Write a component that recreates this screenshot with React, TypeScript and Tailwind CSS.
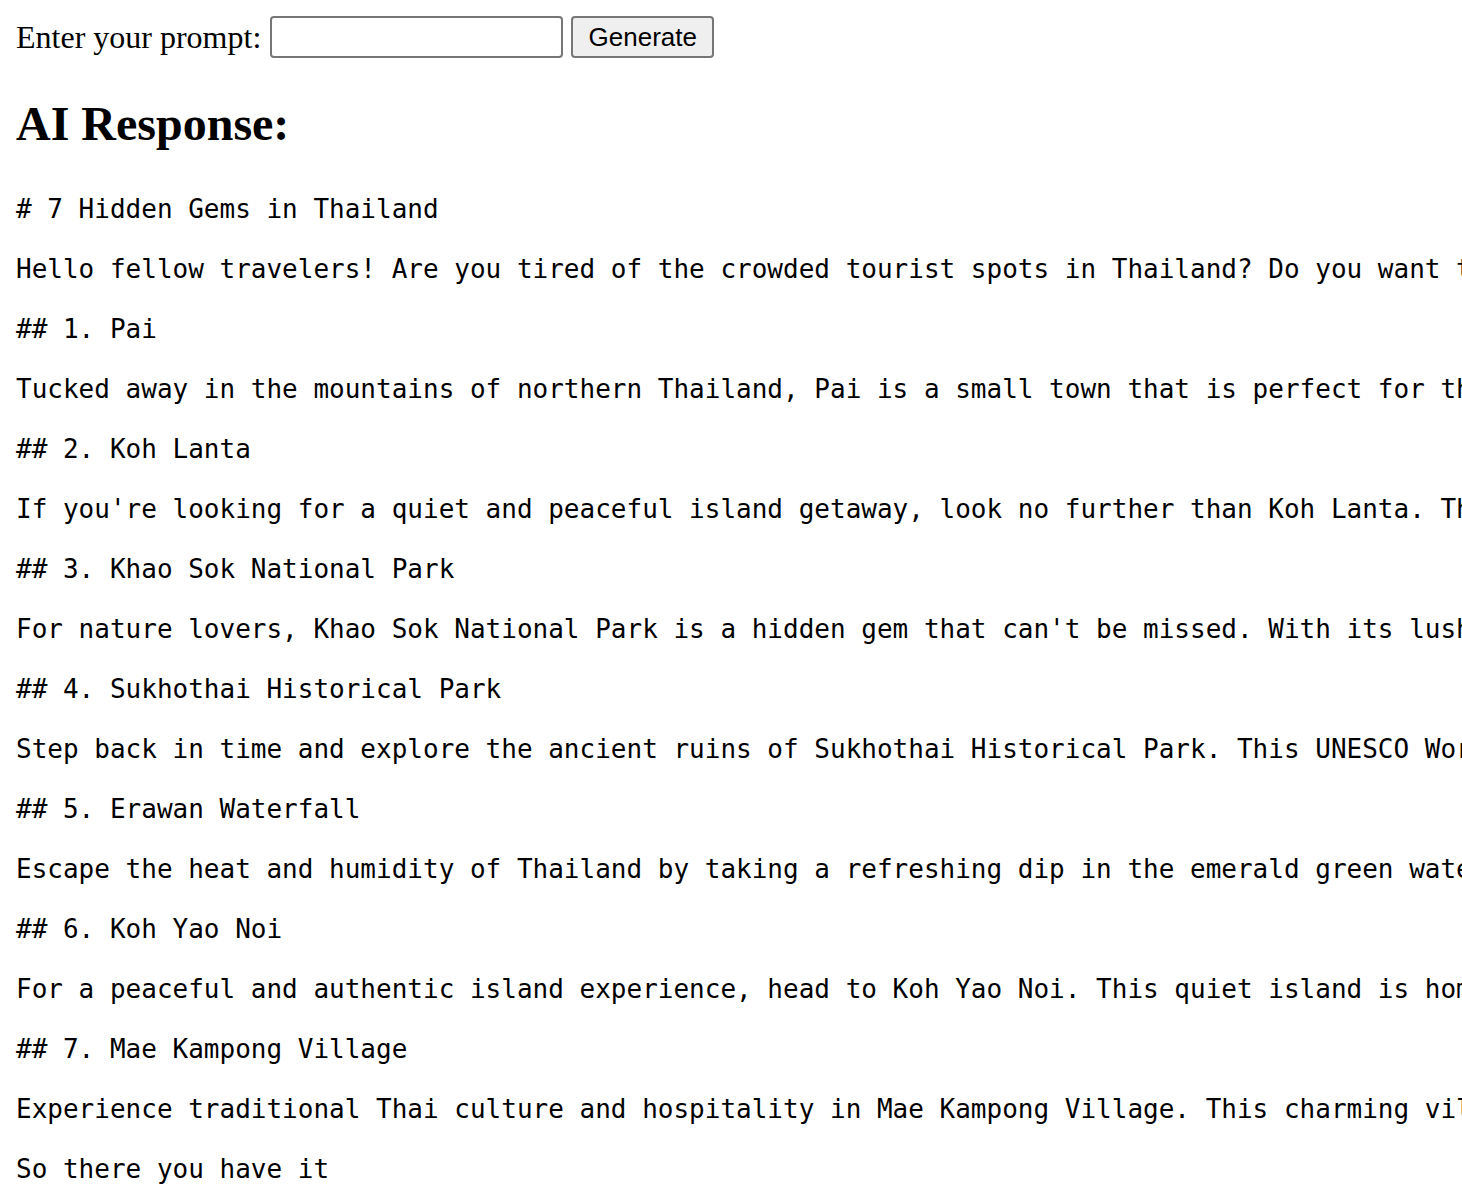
import React from "react";

const lines = [
  "# 7 Hidden Gems in Thailand",
  "Hello fellow travelers! Are you tired of the crowded tourist spots in Thailand? Do you want to explore the hidden gems of this beautiful country?",
  "## 1. Pai",
  "Tucked away in the mountains of northern Thailand, Pai is a small town that is perfect for those looking for a relaxing getaway.",
  "## 2. Koh Lanta",
  "If you're looking for a quiet and peaceful island getaway, look no further than Koh Lanta. This island is known for its beautiful beaches.",
  "## 3. Khao Sok National Park",
  "For nature lovers, Khao Sok National Park is a hidden gem that can't be missed. With its lush rainforests and limestone cliffs.",
  "## 4. Sukhothai Historical Park",
  "Step back in time and explore the ancient ruins of Sukhothai Historical Park. This UNESCO World Heritage Site is home to temples.",
  "## 5. Erawan Waterfall",
  "Escape the heat and humidity of Thailand by taking a refreshing dip in the emerald green waters of Erawan Waterfall.",
  "## 6. Koh Yao Noi",
  "For a peaceful and authentic island experience, head to Koh Yao Noi. This quiet island is home to a small community of fishermen.",
  "## 7. Mae Kampong Village",
  "Experience traditional Thai culture and hospitality in Mae Kampong Village. This charming village is nestled in the mountains.",
  "So there you have it",
];

export default function App() {
  return (
    <div className="w-screen h-screen overflow-hidden bg-white text-black p-4">
      <div className="flex items-center h-[42px]">
        <span className="text-[32px] leading-none font-['Liberation_Serif',serif]">Enter your prompt:</span>
        <input
          type="text"
          className="ml-[9px] w-[293px] h-[42px] border-2 border-[#767676] rounded-[4px] bg-white px-1 outline-none"
        />
        <button className="ml-[8px] w-[143px] h-[42px] border-2 border-[#767676] rounded-[4px] bg-[#efefef] text-[26px] leading-none text-black font-['Liberation_Sans',Arial,sans-serif]">
          Generate
        </button>
      </div>
      <h1 className="text-[48px] font-bold leading-[55px] mt-[38px] mb-[43px] font-['Liberation_Serif',serif]">
        AI Response:
      </h1>
      <div className="whitespace-pre text-[26px] leading-[30px] flex flex-col gap-[30px] font-['DejaVu_Sans_Mono',monospace]">
        {lines.map((l, i) => (
          <div key={i}>{l}</div>
        ))}
      </div>
    </div>
  );
}
